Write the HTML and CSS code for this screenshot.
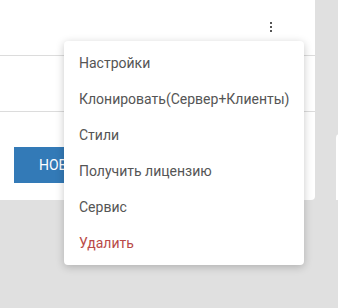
FILE: index.html
```html
<!DOCTYPE html>
<html lang="ru">
<head>
<meta charset="utf-8">
<link rel="stylesheet" href="styles.css">
</head>
<body>
<div class="page">
  <div class="card">
    <div class="card-header">
      <button class="kebab" aria-label="Меню">
        <svg width="2" height="10" viewBox="0 0 2 10"><rect x="0" y="0" width="2" height="2" fill="#555"/><rect x="0" y="4" width="2" height="2" fill="#555"/><rect x="0" y="8" width="2" height="2" fill="#555"/></svg>
      </button>
    </div>
    <div class="card-body"></div>
    <div class="card-footer">
      <button class="btn-primary">Новый сервер</button>
    </div>
  </div>
  <div class="card-next"></div>
</div>
<ul class="menu">
  <li class="menu-item">Настройки</li>
  <li class="menu-item">Клонировать(Сервер+Клиенты)</li>
  <li class="menu-item">Стили</li>
  <li class="menu-item">Получить лицензию</li>
  <li class="menu-item">Сервис</li>
  <li class="menu-item danger">Удалить</li>
</ul>
</body>
</html>
```
FILE: styles.css
```css
html, body {
  margin: 0;
  padding: 0;
}
body {
  background: #e0e0e0;
  font-family: Roboto, "Noto Sans", sans-serif;
  font-size: 14px;
  width: 338px;
  height: 308px;
  overflow: hidden;
  position: relative;
}
.page {
  display: flex;
  align-items: flex-start;
  gap: 21px;
}
.card {
  width: 315px;
  height: 200px;
  flex: none;
  background: #fff;
  border-bottom-right-radius: 4px;
  display: flex;
  flex-direction: column;
}
.card-header {
  height: 55px;
  border-bottom: 1px solid #dcdcdc;
  display: flex;
  justify-content: flex-end;
  align-items: flex-start;
  padding-right: 43px;
}
.kebab {
  border: 0;
  background: none;
  padding: 0;
  margin-top: 22px;
  width: 2px;
  height: 10px;
  display: block;
}
.kebab svg {
  display: block;
}
.card-body {
  height: 55px;
  border-bottom: 1px solid #dcdcdc;
}
.card-footer {
  padding: 35px 0 0 14px;
}
.btn-primary {
  height: 36px;
  border: 0;
  border-radius: 0;
  background: #337ab7;
  color: #fff;
  font-family: Roboto, "Noto Sans", sans-serif;
  font-size: 14px;
  text-transform: uppercase;
  padding: 0 24px 0 25px;
  display: block;
}
.card-next {
  width: 10px;
  height: 66px;
  margin-top: 134px;
  background: #fff;
  border-top-left-radius: 4px;
  flex: none;
}
.menu {
  position: absolute;
  left: 64px;
  top: 41px;
  width: 240px;
  margin: 0;
  padding: 4px 0;
  list-style: none;
  background: #fff;
  border-radius: 4px;
  box-shadow: 0 2px 8px rgba(0, 0, 0, 0.22);
}
.menu-item {
  height: 36px;
  line-height: 36px;
  padding-left: 15px;
  color: #555;
  white-space: nowrap;
}
.menu-item.danger {
  color: #b94a48;
}
```
